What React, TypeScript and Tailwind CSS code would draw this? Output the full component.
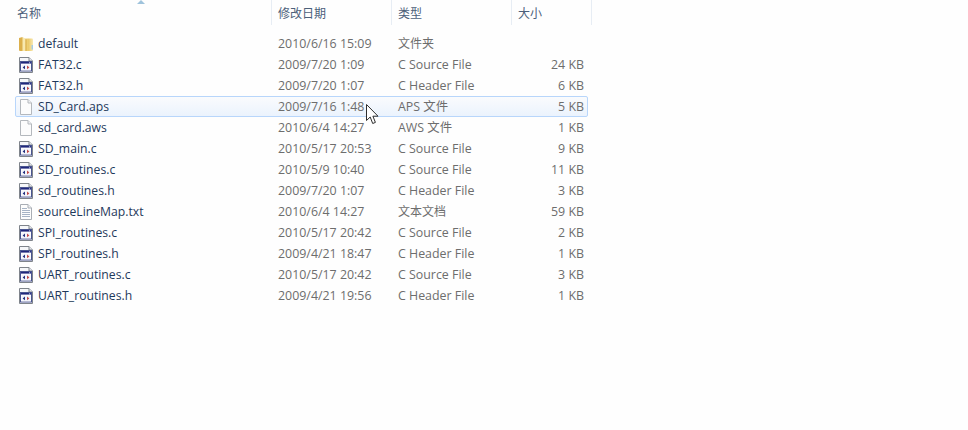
const Font = '"Open Sans","Noto Sans CJK SC",sans-serif';

function Folder() {
  return (
    <svg width="16" height="16" viewBox="0 0 16 16" className="shrink-0">
      <defs>
        <linearGradient id="fg" x1="0" x2="1" y1="0" y2="0">
          <stop offset="0" stopColor="#f2d98c" />
          <stop offset="0.55" stopColor="#eccb6c" />
          <stop offset="1" stopColor="#f7e8b4" />
        </linearGradient>
      </defs>
      <path d="M1 2 L4.5 1 L5 2 L5 15 L2 15 Q1 15 1 14 Z" fill="#dcb04c" />
      <path d="M5 2.5 L14 2.5 Q15 2.5 15 3.5 L15 14 Q15 15 14 15 L5 15 Z" fill="url(#fg)" />
      <path d="M4.5 1 L7.5 2.8 L7.5 15 L4.5 15 Z" fill="#f8e9b0" />
      <path d="M7.5 3 L8.5 3.5 L8.5 15 L7.5 15 Z" fill="#d6a743" />
      <rect x="13.5" y="9" width="1.5" height="4.5" fill="#a8cbe0" />
    </svg>
  );
}

function CFile() {
  return (
    <svg width="16" height="16" viewBox="0 0 16 16" className="shrink-0">
      <path d="M1.5 .5 H11 L14.5 4 V15.5 H1.5 Z" fill="#f6f7f9" stroke="#7f848b" />
      <path d="M11 .5 V4 H14.5" fill="#e6e9ed" stroke="#7f848b" />
      <rect x="2.5" y="4.5" width="11" height="9.5" fill="#fff" stroke="#4a5590" />
      <rect x="3" y="5" width="10" height="1.6" fill="#20277c" />
      <circle cx="11.6" cy="5.8" r="0.6" fill="#dfe4f5" />
      <rect x="3.6" y="7.6" width="8.8" height="5.6" fill="#f4f5fb" />
      <path d="M7 8.6 L4.6 10.4 L7 12.2 Z" fill="#24327f" />
      <path d="M9 8.6 L11.4 10.4 L9 12.2 Z" fill="#c34a4a" />
    </svg>
  );
}

function BlankFile() {
  return (
    <svg width="16" height="16" viewBox="0 0 16 16" className="shrink-0">
      <path d="M2.5 .5 H10 L13.5 4 V15.5 H2.5 Z" fill="#fcfcfc" stroke="#b4b8bd" />
      <path d="M10 .5 V4 H13.5" fill="#f0f1f3" stroke="#b4b8bd" />
    </svg>
  );
}

function TextFile() {
  return (
    <svg width="16" height="16" viewBox="0 0 16 16" className="shrink-0">
      <path d="M2.5 .5 H10 L13.5 4 V15.5 H2.5 Z" fill="#fdfdfd" stroke="#a9aeb5" />
      <path d="M10 .5 V4 H13.5" fill="#eef0f3" stroke="#a9aeb5" />
      <path d="M4 4.5H9M4 6.5H12M4 8.5H12M4 10.5H12M4 12.5H12" stroke="#a7b4c6" strokeWidth="1" />
    </svg>
  );
}

function Cursor() {
  return (
    <svg width="14" height="21" viewBox="0 0 14 21" className="absolute left-[366px] top-[104px]">
      <path
        d="M.5 .5 V16.5 L4.2 13 L6.7 19.5 L9.4 18.4 L6.9 12.2 L12 12.2 Z"
        fill="#fff"
        stroke="#2e2e2e"
        strokeWidth="1"
        strokeLinejoin="round"
      />
    </svg>
  );
}

type Kind = 'folder' | 'c' | 'blank' | 'text';

const rows: { n: string; d: string; t: string; s: string; k: Kind; hot?: boolean; zh?: boolean }[] = [
  { n: 'default', d: '2010/6/16 15:09', t: '文件夹', s: '', k: 'folder', zh: true },
  { n: 'FAT32.c', d: '2009/7/20 1:09', t: 'C Source File', s: '24 KB', k: 'c' },
  { n: 'FAT32.h', d: '2009/7/20 1:07', t: 'C Header File', s: '6 KB', k: 'c' },
  { n: 'SD_Card.aps', d: '2009/7/16 1:48', t: 'APS 文件', s: '5 KB', k: 'blank', hot: true },
  { n: 'sd_card.aws', d: '2010/6/4 14:27', t: 'AWS 文件', s: '1 KB', k: 'blank' },
  { n: 'SD_main.c', d: '2010/5/17 20:53', t: 'C Source File', s: '9 KB', k: 'c' },
  { n: 'SD_routines.c', d: '2010/5/9 10:40', t: 'C Source File', s: '11 KB', k: 'c' },
  { n: 'sd_routines.h', d: '2009/7/20 1:07', t: 'C Header File', s: '3 KB', k: 'c' },
  { n: 'sourceLineMap.txt', d: '2010/6/4 14:27', t: '文本文档', s: '59 KB', k: 'text', zh: true },
  { n: 'SPI_routines.c', d: '2010/5/17 20:42', t: 'C Source File', s: '2 KB', k: 'c' },
  { n: 'SPI_routines.h', d: '2009/4/21 18:47', t: 'C Header File', s: '1 KB', k: 'c' },
  { n: 'UART_routines.c', d: '2010/5/17 20:42', t: 'C Source File', s: '3 KB', k: 'c' },
  { n: 'UART_routines.h', d: '2009/4/21 19:56', t: 'C Header File', s: '1 KB', k: 'c' },
];

function Icon({ k }: { k: Kind }) {
  if (k === 'folder') return <Folder />;
  if (k === 'c') return <CFile />;
  if (k === 'text') return <TextFile />;
  return <BlankFile />;
}

function Head({ label, w }: { label: string; w: string }) {
  return (
    <div className={`${w} h-full flex items-center pl-[6px] pt-[3px] border-r border-[#e7edf4] text-[#4c607a] text-[12px]`}>
      {label}
    </div>
  );
}

export default function App() {
  return (
    <div
      className="relative w-[968px] h-[430px] overflow-hidden bg-[#fefefe] text-[12.4px]"
      style={{ fontFamily: Font }}
    >
      <div className="relative flex h-[25px] pl-[11px]">
        <Head label="名称" w="w-[261px]" />
        <Head label="修改日期" w="w-[120px]" />
        <Head label="类型" w="w-[120px]" />
        <Head label="大小" w="w-[80px]" />
        <svg width="8" height="4" viewBox="0 0 8 4" className="absolute left-[137px] top-0">
          <path d="M0 4 L4 0 L8 4 Z" fill="#9fc3dc" />
        </svg>
      </div>
      <div className="flex flex-col pt-[8px] pl-[15px] w-[588px]">
        {rows.map((r) => (
          <div
            key={r.n}
            className={
              'flex items-center h-[21px] rounded-[2px] ' +
              (r.hot
                ? 'border border-[#b8d6fb] bg-gradient-to-b from-[#fafbfd] to-[#ebf3fd]'
                : 'border border-transparent')
            }
          >
            <div className="w-[239px] flex items-center pl-[2px] text-[#1e395b] gap-[4px]">
              <Icon k={r.k} />
              <span className="block pt-[2px] text-[12.2px]">{r.n}</span>
            </div>
            <div className="w-[120px] text-[#6d6d6d] pl-[23px] pt-[2px]">{r.d}</div>
            <div className={'w-[100px] text-[#6d6d6d] pl-[23px] whitespace-nowrap ' + (r.zh ? 'text-[12px]' : 'pt-[2px]')}>{r.t}</div>
            <div className="flex-1 text-right pr-[3px] pt-[2px] text-[#6d6d6d]">{r.s}</div>
          </div>
        ))}
      </div>
      <Cursor />
    </div>
  );
}
